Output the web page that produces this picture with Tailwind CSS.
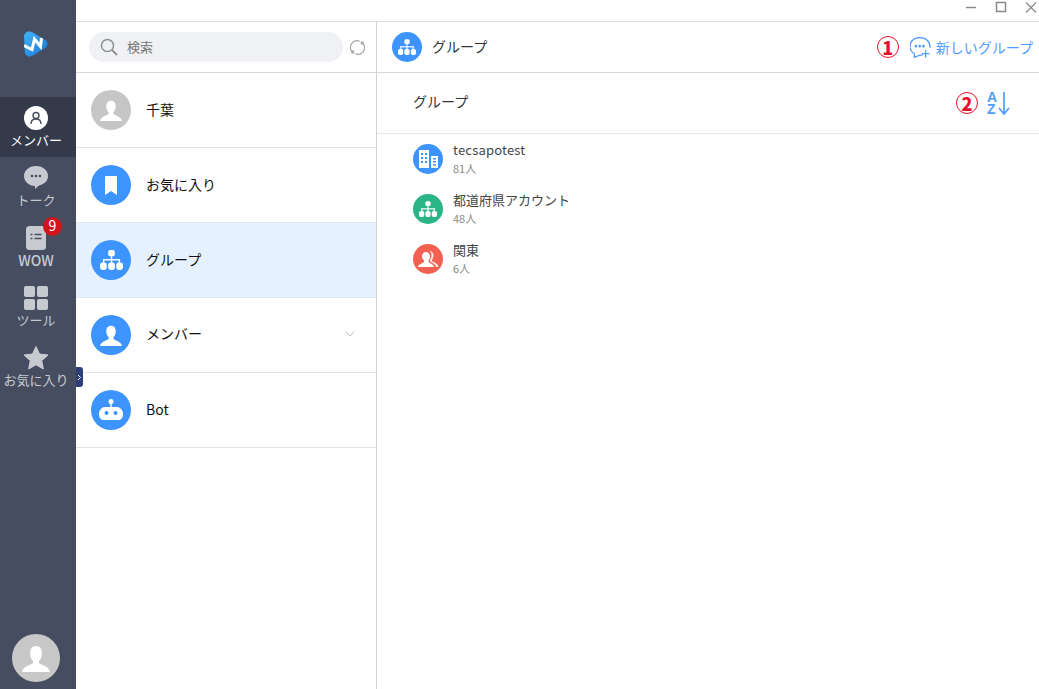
<!DOCTYPE html>
<html lang="ja">
<head>
    <meta charset="UTF-8">
    <title>グループ</title>
    <script src="https://cdn.jsdelivr.net/npm/@tailwindcss/browser@4"></script>
</head>
<body class="bg-white font-['Noto_Sans_CJK_JP','Noto_Sans',sans-serif] overflow-hidden">

<div class="flex w-[1039px] h-[689px]">
    <!-- Side nav -->
    <nav class="relative w-[76px] shrink-0 bg-[#464d60] flex flex-col items-center">
        <div class="h-[97px] w-full flex justify-center pt-[31px] pr-1">
            <svg width="24" height="26" viewBox="0 0 24 26">
                <defs><linearGradient id="logo" x1="0" y1="0" x2="1" y2="1"><stop offset="0" stop-color="#42b6f6"/><stop offset="1" stop-color="#1a74d6"/></linearGradient></defs>
                <path d="M4 0.500 Q6 0 9 1.500 L22 9.500 Q25 13 22 16.500 L9 24.500 Q6 26 4 25.500 Q1.500 24.500 1 22 L0 5 Q0.500 1.500 4 0.500Z" fill="url(#logo)"/>
                <path d="M0 14.500 L8 18.500 L10.500 8 L16.500 15.500 L17.500 7" fill="none" stroke="#fff" stroke-width="3"/>
            </svg>
        </div>

        <a class="w-full h-[60px] pr-1 bg-[#353a4b] flex flex-col items-center pt-[9px] text-white">
            <span class="w-6 h-6 rounded-full bg-white flex items-center justify-center">
                <svg width="14" height="14" viewBox="0 0 14 14" fill="none" stroke="#464d60" stroke-width="1.400"><circle cx="7" cy="4.500" r="3"/><path d="M2 13 C2 9.500 4 8 7 8 S12 9.500 12 13"/></svg>
            </span>
            <span class="text-[13px] leading-[20px] whitespace-nowrap">メンバー</span>
        </a>

        <a class="w-full h-[60px] pr-1 flex flex-col items-center pt-[9px] text-[#c8cad1]">
            <svg width="24" height="24" viewBox="0 0 24 24"><path d="M12 0 C19 0 24 4.500 24 10 C24 15 20 18.500 15 19.500 L11 23 V20 C5 20 0 15.500 0 10 C0 4.500 5 0 12 0Z" fill="#c8cad1"/><circle cx="8" cy="10" r="1.300" fill="#464d60"/><circle cx="12" cy="10" r="1.300" fill="#464d60"/><circle cx="16" cy="10" r="1.300" fill="#464d60"/></svg>
            <span class="text-[13px] leading-[20px] whitespace-nowrap">トーク</span>
        </a>

        <a class="relative w-full h-[60px] pr-1 flex flex-col items-center pt-[9px] text-[#c8cad1]">
            <svg width="20" height="24" viewBox="0 0 20 24"><rect width="20" height="24" rx="3.500" fill="#c8cad1"/><path d="M4.500 8.500h2M4.500 12.500h2M8.500 8.500h7M8.500 12.500h7" stroke="#464d60" stroke-width="1.500"/></svg>
            <span class="absolute left-[43px] top-[0px] w-[19px] h-[19px] rounded-full bg-[#d2141c] text-white text-[14px] leading-[17px] text-center">9</span>
            <span class="text-[14px] leading-[20px] font-medium">WOW</span>
        </a>

        <a class="w-full h-[60px] pr-1 flex flex-col items-center pt-[9px] text-[#c8cad1]">
            <span class="grid grid-cols-2 gap-[2px] w-6 h-6">
                <i class="bg-[#c8cad1] rounded-[2px]"></i><i class="bg-[#c8cad1] rounded-[2px]"></i><i class="bg-[#c8cad1] rounded-[2px]"></i><i class="bg-[#c8cad1] rounded-[2px]"></i>
            </span>
            <span class="text-[13px] leading-[20px] whitespace-nowrap">ツール</span>
        </a>

        <a class="w-full h-[60px] pr-1 flex flex-col items-center pt-[9px] text-[#c8cad1]">
            <svg width="24" height="24" viewBox="0 0 24 24"><path d="M12 0.500 L15.500 8 L24 9 L17.700 14.700 L19.400 23 L12 18.800 L4.600 23 L6.300 14.700 L0 9 L8.500 8Z" fill="#c8cad1" stroke="#c8cad1" stroke-linejoin="round"/></svg>
            <span class="text-[13px] leading-[20px] whitespace-nowrap">お気に入り</span>
        </a>

        <span class="absolute left-[76px] top-[367px] w-[7px] h-5 bg-[#2f3e78] rounded-r-[3px] flex items-center justify-center">
            <svg width="5" height="7" viewBox="0 0 5 7" fill="none" stroke="#fff" stroke-width="1"><path d="M1 1l2.500 2.500L1 6"/></svg>
        </span>

        <span class="mt-auto mb-[7px] self-start ml-3 w-12 h-12 rounded-full bg-[#c8c8c8] flex items-center justify-center">
            <svg width="28" height="27" viewBox="0 0 28 27" fill="#fff"><path d="M14 1 C18 1 20 4 20 8 C20 12 18 15 17 16 V18 C19 20 27 21 28 27 H0 C1 21 9 20 11 18 V16 C10 15 8 12 8 8 C8 4 10 1 14 1Z"/></svg>
        </span>
    </nav>

    <div class="flex-1 flex flex-col min-w-0">
        <!-- Window bar -->
        <div class="h-[22px] shrink-0 border-b border-[#dcdcdc] flex justify-end items-start">
            <svg width="73" height="14" viewBox="0 0 73 14" fill="none" stroke="#8a8a8a" class="mt-px">
                <path d="M0 6.500h10" stroke-width="1.500"/>
                <rect x="30.500" y="1.500" width="9" height="9" stroke-width="1.500"/>
                <path d="M60 1.500l10 10M70 1.500l-10 10" stroke-width="1.200"/>
            </svg>
        </div>

        <div class="flex-1 flex min-h-0">
            <!-- List column -->
            <section class="w-[301px] shrink-0 border-r border-[#d2d2d6] flex flex-col">
                <div class="h-[51px] shrink-0 border-b border-[#d8d8dc] flex items-center pl-[13px]">
                    <div class="w-[254px] h-[30px] rounded-full bg-[#eff1f5] flex items-center pl-[11px]">
                        <svg width="18" height="18" viewBox="0 0 18 18" fill="none" stroke="#8f8f8f" stroke-width="1.500"><circle cx="7.500" cy="7.500" r="6"/><path d="M12 12l5 5" stroke-width="2"/></svg>
                        <span class="ml-[9px] text-[13px] text-[#777]">検索</span>
                    </div>
                    <svg class="ml-[7px]" width="15" height="15" viewBox="0 0 15 15" fill="none" stroke="#a9a9a9" stroke-width="1.300"><path d="M2.500 12 A6.500 6.500 0 0 1 9.500 1.300"/><path d="M12.500 3 A6.500 6.500 0 0 1 5.500 13.700"/><circle cx="2.800" cy="12" r="1" fill="#a9a9a9"/><circle cx="12.200" cy="3" r="1" fill="#a9a9a9"/></svg>
                </div>

                <a class="h-[75px] border-b border-[#e4e4e8] flex items-center pl-[15px]">
                    <span class="w-10 h-10 rounded-full bg-[#c6c6c6] flex items-center justify-center">
                        <svg width="22" height="21" viewBox="0 0 28 27" preserveAspectRatio="none" fill="#fff"><path d="M14 1 C18 1 20 4 20 8 C20 12 18 15 17 16 V18 C19 20 27 21 28 27 H0 C1 21 9 20 11 18 V16 C10 15 8 12 8 8 C8 4 10 1 14 1Z"/></svg>
                    </span>
                    <span class="ml-[15px] mb-[2px] text-[14px] text-[#111]">千葉</span>
                </a>

                <a class="h-[75px] border-b border-[#e4e4e8] flex items-center pl-[15px]">
                    <span class="w-10 h-10 rounded-full bg-[#3d94ff] flex items-center justify-center">
                        <svg width="12" height="19" viewBox="0 0 12 19" fill="#fff"><path d="M1 0h10a1 1 0 0 1 1 1v18l-6-4-6 4V1a1 1 0 0 1 1-1z"/></svg>
                    </span>
                    <span class="ml-[15px] mb-[2px] text-[14px] text-[#111]">お気に入り</span>
                </a>

                <a class="h-[75px] border-b border-[#e2e6ee] bg-[#e5f2fe] flex items-center pl-[15px]">
                    <span class="w-10 h-10 rounded-full bg-[#3d94ff] flex items-center justify-center">
                        <svg width="23" height="20" viewBox="0 0 24 21" fill="#fff"><rect x="8.500" y="0" width="7" height="6.500" rx="2"/><rect x="11.250" y="6" width="1.500" height="4"/><rect x="3" y="9.500" width="18" height="1.500"/><rect x="3" y="9.500" width="1.500" height="4"/><rect x="11.250" y="9.500" width="1.500" height="4"/><rect x="19.500" y="9.500" width="1.500" height="4"/><rect x="0" y="13" width="7" height="8" rx="2.500"/><rect x="8.500" y="13" width="7" height="8" rx="2.500"/><rect x="17" y="13" width="7" height="8" rx="2.500"/></svg>
                    </span>
                    <span class="ml-[15px] mb-[2px] text-[14px] text-[#111]">グループ</span>
                </a>

                <a class="h-[75px] border-b border-[#e4e4e8] flex items-center pl-[15px] pr-[21px]">
                    <span class="w-10 h-10 rounded-full bg-[#3d94ff] flex items-center justify-center">
                        <svg width="22" height="21" viewBox="0 0 28 27" preserveAspectRatio="none" fill="#fff"><path d="M14 1 C18 1 20 4 20 8 C20 12 18 15 17 16 V18 C19 20 27 21 28 27 H0 C1 21 9 20 11 18 V16 C10 15 8 12 8 8 C8 4 10 1 14 1Z"/></svg>
                    </span>
                    <span class="ml-[15px] mb-1 text-[14px] text-[#111]">メンバー</span>
                    <svg class="ml-auto mb-[2px]" width="10" height="6" viewBox="0 0 10 6" fill="none" stroke="#c9bcb8"><path d="M0.500 0.500L5 5l4.500-4.500"/></svg>
                </a>

                <a class="h-[75px] border-b border-[#e4e4e8] flex items-center pl-[15px]">
                    <span class="w-10 h-10 rounded-full bg-[#3d94ff] flex items-center justify-center">
                        <svg width="24" height="22" viewBox="0 0 24 22" fill="#fff"><circle cx="12" cy="2.500" r="2.500"/><rect x="11.300" y="4" width="1.400" height="4"/><path d="M6 8h12c3 0 6 3 6 7 0 4-2 6-5 6H5c-3 0-5-2-5-6 0-4 3-7 6-7z"/><circle cx="7.500" cy="14" r="2" fill="#3d94ff"/><circle cx="16.500" cy="14" r="2" fill="#3d94ff"/></svg>
                    </span>
                    <span class="ml-[15px] mb-[2px] text-[14px] text-[#111]">Bot</span>
                </a>
            </section>

            <!-- Detail column -->
            <main class="flex-1 flex flex-col min-w-0">
                <div class="h-[51px] shrink-0 border-b border-[#d8d8dc] flex items-center pl-[15px] pr-[6px]">
                    <span class="w-[30px] h-[30px] rounded-full bg-[#3d94ff] flex items-center justify-center">
                        <svg width="18" height="16" viewBox="0 0 24 21" fill="#fff"><rect x="8.500" y="0" width="7" height="6.500" rx="2"/><rect x="11.250" y="6" width="1.500" height="4"/><rect x="3" y="9.500" width="18" height="1.500"/><rect x="3" y="9.500" width="1.500" height="4"/><rect x="11.250" y="9.500" width="1.500" height="4"/><rect x="19.500" y="9.500" width="1.500" height="4"/><rect x="0" y="13" width="7" height="8" rx="2.500"/><rect x="8.500" y="13" width="7" height="8" rx="2.500"/><rect x="17" y="13" width="7" height="8" rx="2.500"/></svg>
                    </span>
                    <span class="ml-[10px] mb-[2px] text-[14px] text-[#333]">グループ</span>
                    <span class="ml-auto w-[22px] h-[22px] rounded-full border border-[#e8102a] text-[#e8102a] text-[18px] leading-[20px] font-black text-center">1</span>
                    <svg class="ml-[11px]" width="21" height="21" viewBox="1 1 19.500 19.500" fill="none" stroke="#4f9dff" stroke-width="1.200"><path d="M13 17.500 C12 18 10.500 18 9.500 18 L5 20 L5 16.500 C2.500 15 1 12.500 1 9.500 C1 5 5 1.500 10 1.500 S19.500 5 19.500 9.500 V11"/><path d="M15.500 13v7M12 16.500h7"/><circle cx="6.500" cy="9.500" r=".7" fill="#4f9dff"/><circle cx="10" cy="9.500" r=".7" fill="#4f9dff"/><circle cx="13.500" cy="9.500" r=".7" fill="#4f9dff"/></svg>
                    <span class="ml-[5px] text-[14px] text-[#4f9dff] whitespace-nowrap">新しいグループ</span>
                </div>

                <div class="h-[61px] shrink-0 border-b border-[#e6e6e8] flex items-center pl-9 pr-7">
                    <span class="mb-1 text-[14px] text-[#333]">グループ</span>
                    <span class="ml-auto w-[22px] h-[22px] rounded-full border border-[#e8102a] text-[#e8102a] text-[18px] leading-[20px] font-black text-center">2</span>
                    <span class="ml-[9px] w-[24px] flex items-center">
                        <span class="w-[10px] text-[#4f9dff] text-[14px] leading-[12px] font-bold font-['Liberation_Sans']">A Z</span>
                        <svg class="ml-px" width="12" height="23" viewBox="0 0 12 23" fill="none" stroke="#4f9dff" stroke-width="1.700"><path d="M6 0v22M1 16l5 6 5-6"/></svg>
                    </span>
                </div>

                <ul class="flex flex-col">
                    <li class="h-[50px] flex items-center pl-9">
                        <span class="w-[30px] h-[30px] rounded-full bg-[#3d94ff] flex items-center justify-center">
                            <svg width="19" height="18" viewBox="0 0 19 18" fill="#fff"><path fill-rule="evenodd" d="M0 0h10v18H0zM2 3v2h2V3zM6 3v2h2V3zM2 7v2h2V7zM6 7v2h2V7zM2 11v2h2v-2zM6 11v2h2v-2z"/><path fill-rule="evenodd" d="M12 6h7v12h-7zM14 8v1.500h3V8zM14 11v1.500h3V11zM14 14v1.500h3V14z"/></svg>
                        </span>
                        <span class="ml-[10px] mb-[2px] flex flex-col">
                            <span class="text-[13px] leading-[20px] tracking-[0.2px] text-[#444]">tecsapotest</span>
                            <span class="text-[11px] leading-[16px] text-[#888]">81人</span>
                        </span>
                    </li>
                    <li class="h-[50px] flex items-center pl-9">
                        <span class="w-[30px] h-[30px] rounded-full bg-[#2bb587] flex items-center justify-center">
                            <svg width="18" height="16" viewBox="0 0 24 21" fill="#fff"><rect x="8.500" y="0" width="7" height="6.500" rx="2"/><rect x="11.250" y="6" width="1.500" height="4"/><rect x="3" y="9.500" width="18" height="1.500"/><rect x="3" y="9.500" width="1.500" height="4"/><rect x="11.250" y="9.500" width="1.500" height="4"/><rect x="19.500" y="9.500" width="1.500" height="4"/><rect x="0" y="13" width="7" height="8" rx="2.500"/><rect x="8.500" y="13" width="7" height="8" rx="2.500"/><rect x="17" y="13" width="7" height="8" rx="2.500"/></svg>
                        </span>
                        <span class="ml-[10px] mb-[2px] flex flex-col">
                            <span class="text-[13px] leading-[20px] text-[#444]">都道府県アカウント</span>
                            <span class="text-[11px] leading-[16px] text-[#888]">48人</span>
                        </span>
                    </li>
                    <li class="h-[50px] flex items-center pl-9">
                        <span class="w-[30px] h-[30px] rounded-full bg-[#f26052] flex items-center justify-center">
                            <svg width="22" height="18" viewBox="0 0 22 18" fill="#fff"><path d="M12 1c3 0 4.500 2 4.500 4.500 0 2-1 3.500-1.500 4.500v1c1 1 6 2 6.500 6H19c-.5-3-4-4-6-5.500V9.500c.8-1 1.500-2.200 1.500-4C14.500 3.500 14 2 12 1z" opacity=".85"/><path d="M9 2c2.500 0 4 2 4 4.500 0 2-1 3.500-1.500 4v1.500c1.500 1.500 5 2 5.500 5H1c.5-3 4.500-3.500 6-5v-1.500C6.500 10 5 8.500 5 6.500 5 4 6.500 2 9 2z"/></svg>
                        </span>
                        <span class="ml-[10px] mb-[2px] flex flex-col">
                            <span class="text-[13px] leading-[20px] text-[#444]">関東</span>
                            <span class="text-[11px] leading-[16px] text-[#888]">6人</span>
                        </span>
                    </li>
                </ul>
            </main>
        </div>
    </div>
</div>

</body>
</html>
